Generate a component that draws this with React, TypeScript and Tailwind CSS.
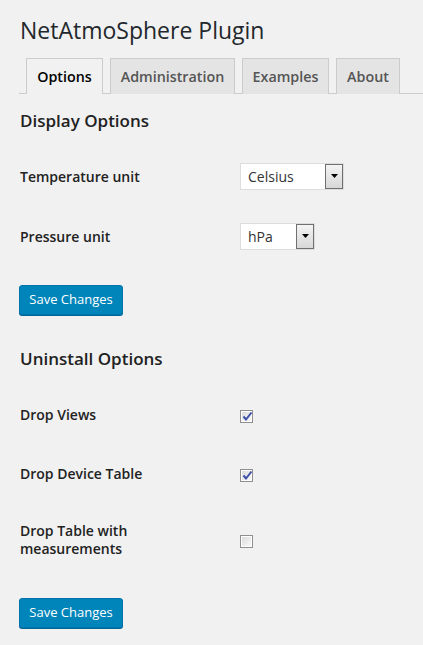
import React from 'react';

const tabs = [
  { label: 'Options', w: 'w-[77px]', active: true },
  { label: 'Administration', w: 'w-[125px]', active: false },
  { label: 'Examples', w: 'w-[87px]', active: false },
  { label: 'About', w: 'w-[64px]', active: false },
];

const Select: React.FC<{ value: string; width: string }> = ({ value, width }) => (
  <div className={`flex h-[27px] ${width} items-stretch border border-[#dddddd] bg-white`}>
    <div className="flex flex-1 items-center pl-[7px] text-[14px] text-[#333333]">{value}</div>
    <div className="flex w-[18px] items-center justify-center border border-[#707070] bg-gradient-to-b from-[#f4f4f4] to-[#d8d8d8]">
      <svg width="7" height="4" viewBox="0 0 7 4">
        <path d="M0 0h7L3.5 4z" fill="#000" />
      </svg>
    </div>
  </div>
);

const Checkbox: React.FC<{ checked: boolean }> = ({ checked }) => (
  <div className="relative flex h-[13px] w-[13px] items-center justify-center border border-[#8f8f8f] bg-white">
    <div className="h-[9px] w-[9px] bg-gradient-to-br from-[#dcdcdc] to-[#f8f8f8]" />
    {checked && (
      <svg className="absolute left-[1px] top-[0px]" width="11" height="11" viewBox="0 0 11 11">
        <path d="M1.5 5.5 L4 8.5 L9.5 1.5" fill="none" stroke="#3c4fa8" strokeWidth="2" />
      </svg>
    )}
  </div>
);

const SaveButton: React.FC = () => (
  <button className="-ml-px h-[30px] w-[104px] rounded-[3px] border border-[#0073aa] bg-[#0085ba] text-[13px] text-white shadow-[0_1px_0_#006799]">
    Save Changes
  </button>
);

export default function App() {
  return (
    <div className="min-h-[645px] bg-[#f1f1f1] font-['Open_Sans',sans-serif] text-[#222222]">
      <div className="pl-[20px] pt-[14px]">
        <h2 className="h-[32px] text-[23px] leading-[32px] text-[#23282d]">NetAtmoSphere Plugin</h2>
      </div>

      <div className="ml-[19px] mt-[12px] flex items-end gap-[7px] border-b border-[#cccccc] pl-[7px]">
        {tabs.map(t => (
          <div
            key={t.label}
            className={`-mb-px flex h-[36px] ${t.w} items-center justify-center border border-b-0 border-[#cccccc] text-[14.3px] font-semibold ${
              t.active ? 'h-[36px] border-b border-b-[#f1f1f1] bg-[#f1f1f1] text-[#000000]' : 'bg-[#e4e4e4] text-[#555555]'
            }`}
          >
            {t.label}
          </div>
        ))}
      </div>

      <div className="pl-[20px]">
        <h3 className="mt-[15px] h-[24px] text-[17px] font-semibold leading-[24px]">Display Options</h3>

        <div className="mt-[13px] flex h-[60px] items-center">
          <div className="w-[220px] text-[14px] font-semibold">Temperature unit</div>
          <Select value="Celsius" width="w-[104px]" />
        </div>
        <div className="flex h-[60px] items-center">
          <div className="w-[220px] text-[14px] font-semibold">Pressure unit</div>
          <Select value="hPa" width="w-[75px]" />
        </div>

        <div className="mt-[19px]">
          <SaveButton />
        </div>

        <h3 className="mt-[32px] h-[24px] text-[17px] font-semibold leading-[24px]">Uninstall Options</h3>

        <div className="mt-[14px] flex h-[59px] items-center">
          <div className="w-[220px] text-[14px] font-semibold">Drop Views</div>
          <div className="mt-[3px]"><Checkbox checked /></div>
        </div>
        <div className="flex h-[59px] items-center">
          <div className="w-[220px] text-[14px] font-semibold">Drop Device Table</div>
          <div className="mt-[3px]"><Checkbox checked /></div>
        </div>
        <div className="flex h-[74px] items-center">
          <div className="w-[220px] pr-[10px] text-[14px] font-semibold leading-[18px]">
            Drop Table with measurements
          </div>
          <div className="mt-[2px]"><Checkbox checked={false} /></div>
        </div>

        <div className="mt-[21px] pb-[18px]">
          <SaveButton />
        </div>
      </div>
    </div>
  );
}
